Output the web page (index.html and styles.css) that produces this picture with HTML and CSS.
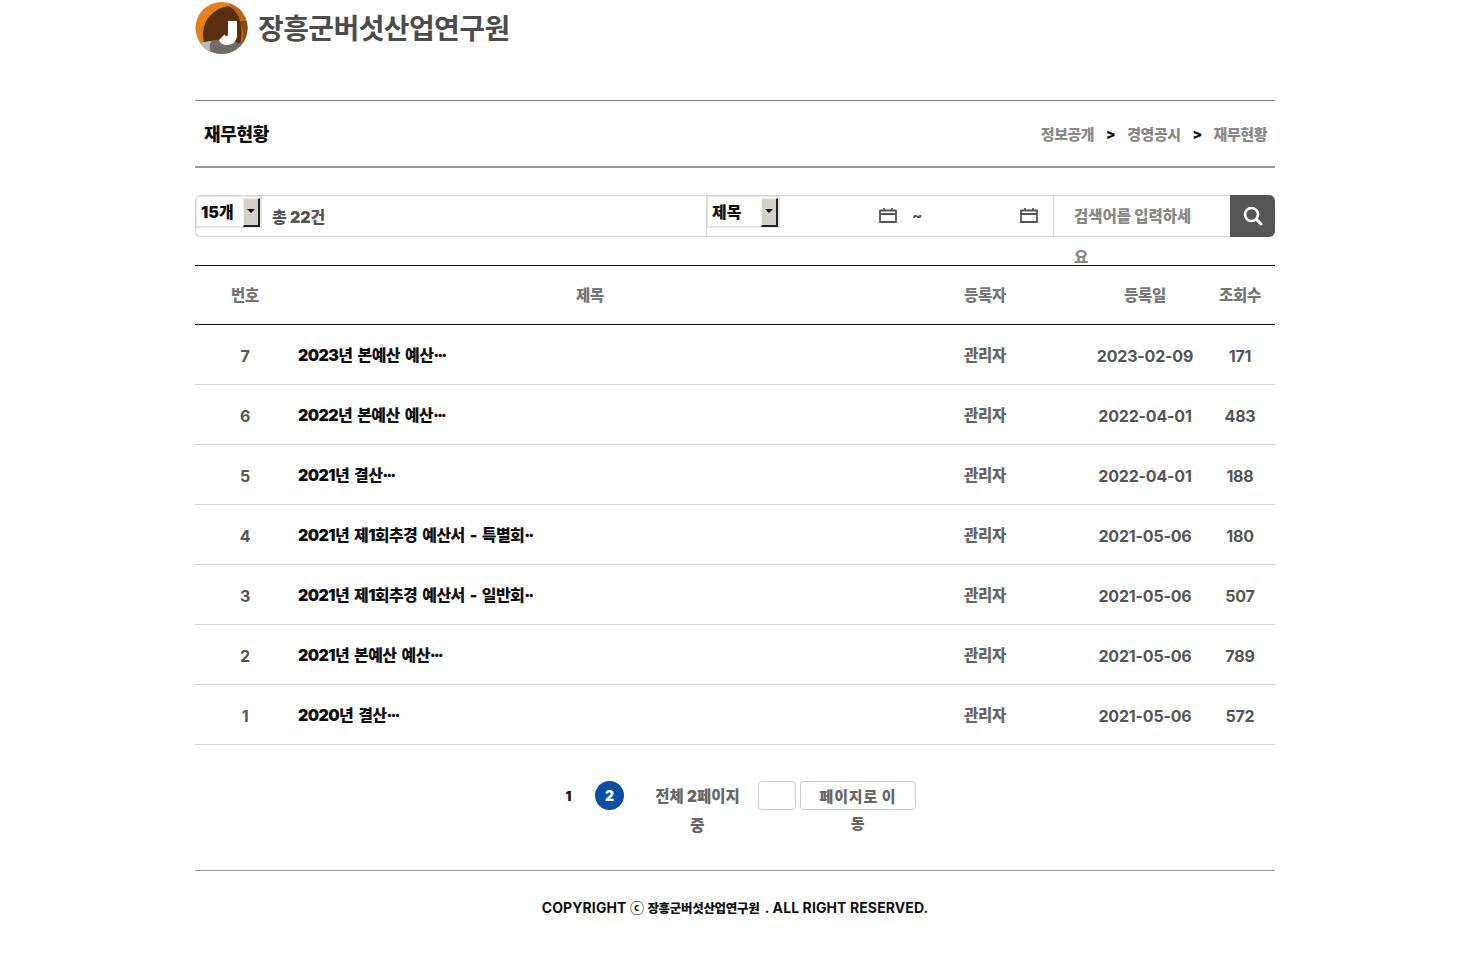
FILE: index.html
```html
<!DOCTYPE html>
<html lang="ko">
<head>
<meta charset="utf-8">
<title>재무현황</title>
<link rel="stylesheet" href="styles.css">
</head>
<body>
<div class="page">
  <header class="site-head">
    <svg class="logo-mark" width="54" height="54" viewBox="0 0 54 54">
      <defs><clipPath id="disc"><circle cx="26.5" cy="27" r="26"/></clipPath></defs>
      <g clip-path="url(#disc)">
        <rect width="54" height="54" fill="#e27f1e"/>
        <path d="M33 0C46 2 54 14 54 30V46H42V20Z" fill="#b9661a"/>
        <path d="M43 20C49 26 50 36 46 44H54V20Z" fill="#8a4a12"/>
        <path d="M9 42C5 24 14 9 33 5C45 10 49 28 45 44C34 38 20 38 9 42Z" fill="#58300f"/>
        <path d="M5 42C18 38 34 38 52 44L42 56H10Z" fill="#716c6a"/>
        <path d="M5 42C10 41 14 40 17 40C13 44 14 50 20 56H10Z" fill="#bdb9b6"/>
        <path d="M33 20H42V34C42 41 37 44 32 44C28 44 25 42 24 39L29.500 33.500C31 36 33 36 33 32Z" fill="#fff"/>
      </g>
    </svg>
    <span class="logo-text">장흥군버섯산업연구원</span>
  </header>

  <div class="title-row">
    <h1 class="title">재무현황</h1>
    <nav class="crumbs">
      <span>정보공개</span><b>&gt;</b><span>경영공시</span><b>&gt;</b><span>재무현황</span>
    </nav>
  </div>

  <form class="search-bar">
    <div class="group group-count">
      <div class="select select-count"><span>15개</span><i class="arrow"></i></div>
      <span class="total">총 22건</span>
    </div>
    <div class="group group-filter">
      <div class="select select-field"><span>제목</span><i class="arrow"></i></div>
      <svg class="cal cal-a" width="18" height="16" viewBox="0 0 18 16"><path d="M1 3.500H17V15H1ZM1 7H17M5 1V3.500M13 1V3.500" fill="none" stroke="#555" stroke-width="1.800"/></svg>
      <span class="tilde">~</span>
      <svg class="cal cal-b" width="18" height="16" viewBox="0 0 18 16"><path d="M1 3.500H17V15H1ZM1 7H17M5 1V3.500M13 1V3.500" fill="none" stroke="#555" stroke-width="1.800"/></svg>
    </div>
    <div class="keyword">검색어를 입력하세요</div>
    <div class="search-btn">
      <svg width="20" height="20" viewBox="0 0 20 20"><circle cx="8.500" cy="8.500" r="6.500" fill="none" stroke="#fff" stroke-width="2.600"/><path d="M13.500 13.500L18 18" stroke="#fff" stroke-width="3" stroke-linecap="round"/></svg>
    </div>
  </form>

  <table class="board">
    <colgroup>
      <col class="c-no"><col class="c-title"><col class="c-author"><col class="c-date"><col class="c-views">
    </colgroup>
    <thead>
      <tr><th>번호</th><th>제목</th><th>등록자</th><th>등록일</th><th>조회수</th></tr>
    </thead>
    <tbody>
      <tr><td class="num">7</td><td class="subject">2023년 본예산 예산<span class="more">···</span></td><td class="who">관리자</td><td class="num">2023-02-09</td><td class="num">171</td></tr>
      <tr><td class="num">6</td><td class="subject">2022년 본예산 예산<span class="more">···</span></td><td class="who">관리자</td><td class="num">2022-04-01</td><td class="num">483</td></tr>
      <tr><td class="num">5</td><td class="subject">2021년 결산<span class="more">···</span></td><td class="who">관리자</td><td class="num">2022-04-01</td><td class="num">188</td></tr>
      <tr><td class="num">4</td><td class="subject">2021년 제1회추경 예산서 - 특별회<span class="more">··</span></td><td class="who">관리자</td><td class="num">2021-05-06</td><td class="num">180</td></tr>
      <tr><td class="num">3</td><td class="subject">2021년 제1회추경 예산서 - 일반회<span class="more">··</span></td><td class="who">관리자</td><td class="num">2021-05-06</td><td class="num">507</td></tr>
      <tr><td class="num">2</td><td class="subject">2021년 본예산 예산<span class="more">···</span></td><td class="who">관리자</td><td class="num">2021-05-06</td><td class="num">789</td></tr>
      <tr><td class="num">1</td><td class="subject">2020년 결산<span class="more">···</span></td><td class="who">관리자</td><td class="num">2021-05-06</td><td class="num">572</td></tr>
    </tbody>
  </table>

  <div class="pager">
    <a class="page-link">1</a>
    <a class="page-link current">2</a>
    <span class="page-total">전체 2페이지 중</span>
    <span class="page-input"></span>
    <span class="page-go">페이지로 이동</span>
  </div>

  <footer class="site-foot">COPYRIGHT ⓒ <span class="foot-name">장흥군버섯산업연구원</span> . ALL RIGHT RESERVED.</footer>
</div>
</body>
</html>
```

FILE: styles.css
```css
*, *::before, *::after { box-sizing: border-box; }
html, body { margin: 0; padding: 0; background: #fff; }
body {
  font-family: "Inter", "Noto Sans CJK KR", sans-serif;
  font-weight: 800;
  color: #555;
}
.page { width: 1080px; margin: 0 auto; }

.site-head { height: 101px; display: flex; align-items: flex-start; gap: 9px; padding-top: 1px; border-bottom: 1px solid #8c8c8c; }
.logo-mark { display: block; }
.logo-text { font-size: 28px; line-height: 56px; color: #4c4c4c; letter-spacing: -0.6px; font-weight: 700; }

.title-row { height: 67px; display: flex; align-items: center; justify-content: space-between; padding: 0 8px 2px 9px; border-bottom: 2px solid #9a9a94; }
.title { margin: 0; font-size: 18px; font-weight: 900; color: #111; letter-spacing: -0.3px; }
.crumbs { display: flex; align-items: center; padding-top: 2px; font-size: 15px; font-weight: 900; color: #888; letter-spacing: -0.45px; }
.crumbs b { color: #111; width: 33px; text-align: center; font-size: 14px; }

.search-bar { margin-top: 27px; height: 42px; display: flex; position: relative; }
.group { height: 42px; border: 1px solid #d4d4d4; border-right: 0; display: flex; align-items: flex-start; }
.group-count { width: 511px; border-radius: 6px 0 0 6px; }
.group-filter { width: 347px; border-left: 1px solid #d4d4d4; position: relative; }
.select { height: 32px; border: 2px solid #e4e4e4; border-width: 1px 2px 2px 1px; display: flex; justify-content: space-between; align-items: flex-start; font-size: 16px; font-weight: 900; color: #111; padding: 0 0 0 4px; line-height: 31px; }
.select-count { width: 66px; }
.select-field { width: 73px; }
.arrow { display: block; position: relative; width: 17px; height: 29px; margin-top: 1px; background: #d4d0c8; border-right: 2px solid #222; border-bottom: 2px solid #222; border-left: 1px solid #eee; border-top: 1px solid #eee; }
.arrow::after { content: ""; position: absolute; left: 3px; top: 10px; border: 4px solid transparent; border-top: 4px solid #000; border-bottom: 0; }
.total { margin-left: 10px; font-size: 16px; font-weight: 900; line-height: 42px; color: #555; }
.cal { display: block; margin-top: 11px; }
.cal-a { margin-left: 99px; }
.tilde { margin-left: 15px; font-size: 15px; line-height: 40px; color: #555; }
.cal-b { margin-left: 98px; }
.keyword { width: 177px; height: 42px; border-top: 1px solid #d4d4d4; border-bottom: 1px solid #d4d4d4; border-left: 1px solid #d4d4d4; padding-left: 20px; padding-right: 30px; font-size: 15.5px; font-weight: 900; line-height: 41px; color: #888; word-break: break-all; }
.search-btn { width: 45px; height: 42px; background: #555; border-radius: 0 6px 6px 0; display: flex; align-items: center; justify-content: center; }

.board { width: 1080px; margin-top: 28px; border-collapse: collapse; table-layout: fixed; border-top: 1px solid #111; }
.c-no { width: 100px; }
.c-title { width: 590px; }
.c-author { width: 200px; }
.c-date { width: 120px; }
.c-views { width: 70px; }
.board th { height: 59px; font-size: 15.5px; font-weight: 900; color: #777; border-bottom: 1px solid #111; padding: 0 0 2px; letter-spacing: -0.2px; }
.board td { height: 60px; border-bottom: 1px solid #d6d6d6; text-align: center; padding: 0; white-space: nowrap; }
.board .num { font-size: 16px; color: #555; font-weight: 700; letter-spacing: -0.2px; padding: 2px 0 0; }
.board .subject { text-align: left; padding: 0 0 1px 3px; font-size: 16px; font-weight: 900; color: #111; letter-spacing: -0.6px; word-spacing: 2.5px; }
.board .more { letter-spacing: -2px; }
.board .who { font-size: 15.5px; font-weight: 900; color: #666; letter-spacing: -0.2px; padding-bottom: 1px; }

.pager { margin-top: 36px; height: 90px; display: flex; align-items: flex-start; border-bottom: 1px solid #999; padding-left: 359px; }
.page-link { width: 29px; height: 29px; line-height: 30px; text-align: center; font-size: 13px; font-weight: 900; color: #111; border-radius: 50%; }
.page-link.current { margin-left: 12px; background: #0b4ea2; color: #fff; font-size: 14px; }
.page-total { width: 105px; margin-left: 21px; font-size: 15.5px; font-weight: 900; line-height: 29px; text-align: center; color: #666; word-break: keep-all; letter-spacing: 0; padding: 1px 4px 0; }
.page-input { width: 38px; height: 29px; margin-left: 8px; border: 1px solid #ccc; border-radius: 4px; }
.page-go { width: 116px; margin-left: 4px; min-height: 29px; font-size: 15px; font-weight: 900; line-height: 27px; text-align: center; color: #666; position: relative; padding: 2px 16px 0; word-break: break-all; letter-spacing: 0.8px; }
.page-go::before { content: ""; position: absolute; left: 0; top: 0; width: 116px; height: 29px; border: 1px solid #ccc; border-radius: 4px; }

.site-foot { padding-top: 28px; font-size: 14px; line-height: 18px; color: #111; text-align: center; font-weight: 700; letter-spacing: 0.1px; }
.foot-name { font-size: 12.5px; font-weight: 900; letter-spacing: -0.3px; margin-right: 2px; }
```
